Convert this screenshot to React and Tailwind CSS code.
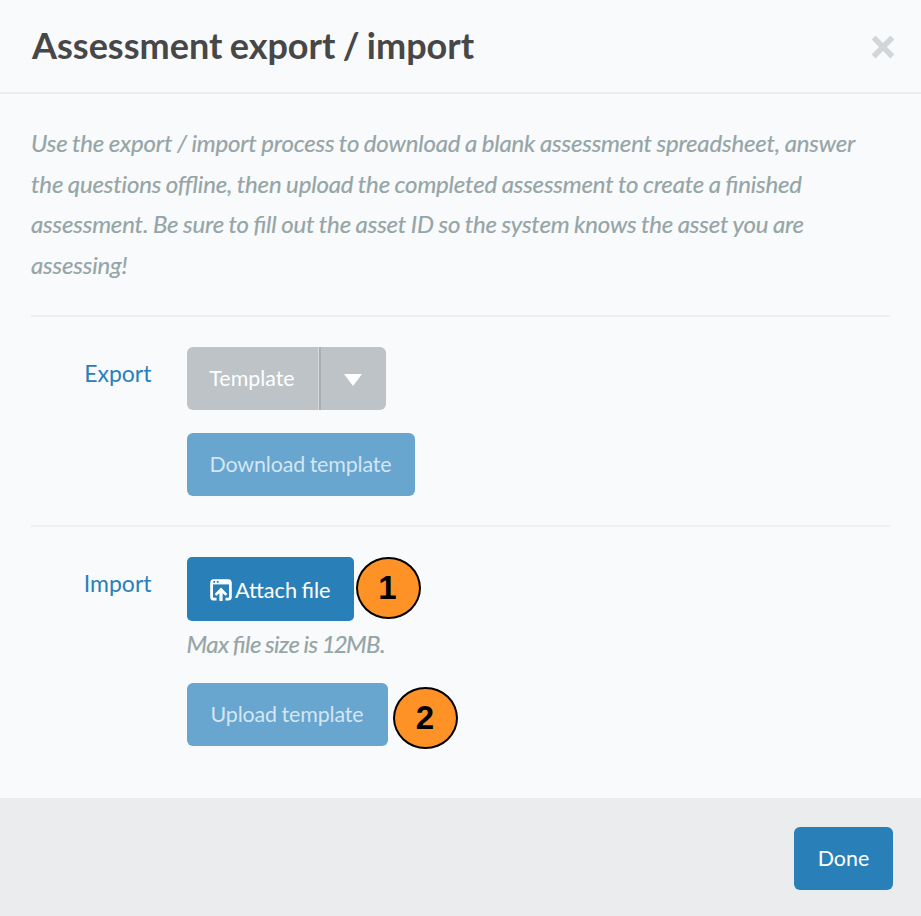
import React from "react";

function Marker({ children, className }) {
  return (
    <span
      className={`flex h-[62px] w-[65px] items-center justify-center rounded-[50%] border-2 border-black bg-[#ff9226] pb-[2px] font-['Liberation_Sans',sans-serif] text-[33px] leading-none font-bold text-black ${className}`}
    >
      {children}
    </span>
  );
}

function UploadIcon() {
  return (
    <svg width="22" height="22" viewBox="0 0 22 22" className="mr-[3px] mb-[2px] shrink-0" fill="none" stroke="#fff">
      <path d="M6.5 20.2H4Q1.6 20.2 1.6 18V4Q1.6 1.6 4 1.6H18Q20.4 1.6 20.4 4V18Q20.4 20.2 18 20.2H15.5" strokeWidth="2.8" />
      <path d="M1 0.9H21V5.4H1Z" fill="#fff" stroke="none" />
      <path d="M3.3 2.1H5.1V3.8H3.3ZM6.8 2.1H8.6V3.8H6.8Z" fill="#2980b9" stroke="none" />
      <path d="M11 8.4L17.3 15L15.6 16.8L12.6 14.2V22H9.4V14.2L6.4 16.8L4.7 15Z" fill="#fff" stroke="none" />
    </svg>
  );
}

export default function App() {
  return (
    <div className="flex h-[916px] w-[921px] flex-col overflow-hidden bg-[#f9fafc] font-['Lato',sans-serif]">
      <header className="flex h-[94px] shrink-0 items-center justify-between border-b-2 border-[#ebecee] pr-[26px] pl-8">
        <h1 className="pb-[2px] text-[36px] leading-none font-bold text-[#474747] [word-spacing:-1.4px]">Assessment export / import</h1>
        <button aria-label="Close" className="pt-[2px]">
          <svg width="24" height="24" viewBox="0 0 24 24" stroke="#d2d6d9" strokeWidth="5.6">
            <path d="M2.6 2.6L21.4 21.4M21.4 2.6L2.6 21.4" />
          </svg>
        </button>
      </header>

      <main className="h-[704px] shrink-0 pr-[31px] pl-[31px]">
        <p className="h-[223px] border-b-2 border-[#eeeff1] pt-[29px] text-[24px] leading-[40.7px] tracking-[-0.17px] whitespace-nowrap text-[#95a5a6] italic [-webkit-text-stroke:0.2px_#95a5a6] [word-spacing:-0.8px] [font-feature-settings:'liga'_1]">
          Use the export / import process to download a blank assessment spreadsheet, answer<br />
          the <span className="[font-feature-settings:'liga'_0]">questions</span> offline, then upload the completed assessment to create a finished<br />
          assessment. Be sure to fill out the asset ID so the system knows the asset you are<br />
          assessing!
        </p>

        <section className="flex h-[210px] border-b-2 border-[#eeeff1] pt-[30px]">
          <div className="mr-[35px] w-[120.5px] pt-[11px] text-right text-[23px] leading-[30px] text-[#2980b9]">Export</div>
          <div className="flex flex-col items-start gap-[23px]">
            <div className="flex h-[63px] w-[199px] overflow-hidden rounded-[6px] bg-[#bdc3c7] text-[21.4px] text-white">
              <button className="flex w-[132px] items-center justify-center border-r border-[#d4d8da] pb-px">Template</button>
              <button aria-label="Options" className="flex flex-1 items-center justify-center border-l-2 border-[#a9b0b4] pr-px">
                <svg width="18" height="12" viewBox="0 0 18 12" className="mt-[3px]">
                  <path d="M0 0H18L9 12Z" fill="#fff" />
                </svg>
              </button>
            </div>
            <button className="h-[63px] w-[228px] rounded-[6px] bg-[#68a5cf] pb-px text-[21.4px] tracking-[-0.14px] text-[#d4e6f2] [word-spacing:-0.7px]">Download template</button>
          </div>
        </section>

        <section className="flex pt-[30px]">
          <div className="mr-[35px] w-[120.5px] pt-[11px] text-right text-[23px] leading-[30px] text-[#2980b9]">Import</div>
          <div className="flex flex-col items-start">
            <div className="flex">
              <button className="flex h-[64px] w-[167.5px] items-center justify-center rounded-[5px] bg-[#2980b9] pt-[3px] text-[21.7px] text-white [word-spacing:-1px]">
                <UploadIcon />
                Attach file
              </button>
              <Marker className="ml-[2px] pr-[2px]">1</Marker>
            </div>
            <div className="h-[62px] pt-[7px] text-[24px] leading-[32px] tracking-[-0.5px] text-[#95a5a6] italic [-webkit-text-stroke:0.2px_#95a5a6] [word-spacing:-1.1px] [font-feature-settings:'liga'_1]">
              Max file size is <span className="tracking-[-1.8px]">12</span>MB.
            </div>
            <div className="flex">
              <button className="h-[63px] w-[201px] rounded-[6px] bg-[#68a5cf] pb-px text-[21.4px] tracking-[-0.14px] text-[#d4e6f2] [word-spacing:-0.7px]">Upload template</button>
              <Marker className="mt-[4px] ml-[5px]">2</Marker>
            </div>
          </div>
        </section>
      </main>

      <footer className="flex flex-1 items-start justify-end bg-[#ebecee] pt-[29px] pr-[28px]">
        <button className="h-[63px] w-[99px] rounded-[6px] bg-[#2980b9] pb-px text-[21.4px] text-white">Done</button>
      </footer>
    </div>
  );
}
